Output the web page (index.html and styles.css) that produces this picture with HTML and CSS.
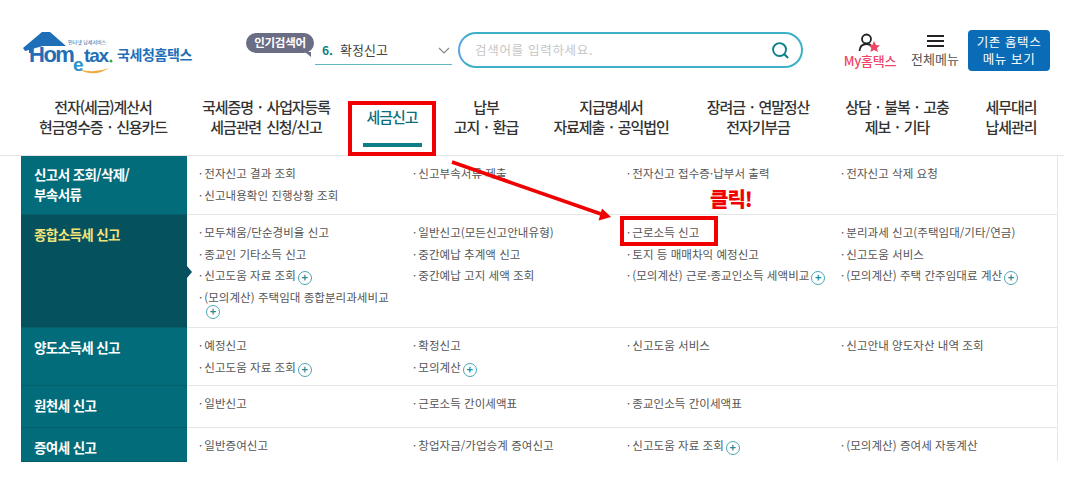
FILE: index.html
```html
<!DOCTYPE html>
<html lang="ko">
<head>
  <meta charset="utf-8">
  <title>국세청 홈택스</title>
  <link rel="stylesheet" href="styles.css">
</head>
<body>
  <div class="page">
    <header class="top">
      <a class="logo">
        <svg class="logo-mark" width="95" height="50" viewBox="0 0 95 50">
          <path d="M1 20 L20 4 H28 L44 18 H21 L10 21 V25 H7 V22 L3 23 Z" fill="#1f6fb8"/>
          <path d="M56 41 Q72 50 87 40 Q72 46 56 41 Z" fill="#f0a93c"/>
          <text x="7" y="34" class="logo-word">Hom</text>
          <text x="51" y="43" class="logo-e">e</text>
          <text x="62" y="34" class="logo-word small">tax</text>
          <circle cx="89" cy="33" r="1.500" fill="#3aa537"/>
          <text x="46" y="16" class="logo-sub">인터넷 납세서비스</text>
        </svg>
        <span class="logo-name">국세청홈택스</span>
      </a>

      <div class="popular">
        <span class="popular-tag">인기검색어</span>
        <div class="popular-select">
          <span class="popular-num">6.</span>
          <span class="popular-text">확정신고</span>
          <svg class="chev" width="12" height="7" viewBox="0 0 12 7"><path d="M1 1 L6 6 L11 1" fill="none" stroke="#888" stroke-width="1.200"/></svg>
        </div>
      </div>

      <div class="search">
        <span class="search-hint">검색어를 입력하세요.</span>
        <svg width="19" height="19" viewBox="0 0 20 20"><circle cx="9" cy="9" r="6.800" fill="none" stroke="#0d7f88" stroke-width="2"/><path d="M14 14 L18 18" stroke="#0d7f88" stroke-width="2.200"/></svg>
      </div>

      <a class="util util-my">
        <svg width="24" height="20" viewBox="0 0 24 20">
          <circle cx="8.500" cy="6" r="4.500" fill="none" stroke="#222" stroke-width="1.800"/>
          <path d="M1.500 18 Q2 11 8.500 11 Q12 11 13.500 13" fill="none" stroke="#222" stroke-width="1.800"/>
          <path d="M16 8 L18 12 L22 12.400 L19 15 L20 19 L16 17 L12.400 19 L13.300 15 L10.500 12.400 L14.300 12 Z" fill="#ee4667"/>
        </svg>
        <span>My홈택스</span>
      </a>
      <a class="util util-all">
        <span class="burger"><i></i><i></i><i></i></span>
        <span>전체메뉴</span>
      </a>
      <a class="old-btn">기존 홈택스<br>메뉴 보기</a>
    </header>

    <nav class="gnb">
      <a class="gnb-item w1">전자(세금)계산서<br>현금영수증 · 신용카드</a>
      <a class="gnb-item w2">국세증명 · 사업자등록<br>세금관련 신청/신고</a>
      <a class="gnb-item w3 active"><span>세금신고</span></a>
      <a class="gnb-item w4">납부<br>고지 · 환급</a>
      <a class="gnb-item w5">지급명세서<br>자료제출 · 공익법인</a>
      <a class="gnb-item w6">장려금 · 연말정산<br>전자기부금</a>
      <a class="gnb-item w7">상담 · 불복 · 고충<br>제보 · 기타</a>
      <a class="gnb-item w8">세무대리<br>납세관리</a>
    </nav>

    <section class="menu">
      <div class="row r1">
        <h3>신고서 조회/삭제/<br>부속서류</h3>
        <ul>
          <li>전자신고 결과 조회</li>
          <li>신고부속서류 제출</li>
          <li>전자신고 접수증·납부서 출력</li>
          <li>전자신고 삭제 요청</li>
          <li>신고내용확인 진행상황 조회</li>
        </ul>
      </div>
      <div class="row r2 current">
        <h3>종합소득세 신고</h3>
        <ul>
          <li>모두채움/단순경비율 신고</li>
          <li>일반신고(모든신고안내유형)</li>
          <li>근로소득 신고</li>
          <li>분리과세 신고(주택임대/기타/연금)</li>
          <li>종교인 기타소득 신고</li>
          <li>중간예납 추계액 신고</li>
          <li>토지 등 매매차익 예정신고</li>
          <li>신고도움 서비스</li>
          <li>신고도움 자료 조회<b class="plus">+</b></li>
          <li>중간예납 고지 세액 조회</li>
          <li>(모의계산) 근로·종교인소득 세액비교<b class="plus">+</b></li>
          <li>(모의계산) 주택 간주임대료 계산<b class="plus">+</b></li>
          <li class="wrap">(모의계산) 주택임대 종합분리과세비교 <b class="plus">+</b></li>
        </ul>
      </div>
      <div class="row r3">
        <h3>양도소득세 신고</h3>
        <ul>
          <li>예정신고</li>
          <li>확정신고</li>
          <li>신고도움 서비스</li>
          <li>신고안내 양도자산 내역 조회</li>
          <li>신고도움 자료 조회<b class="plus">+</b></li>
          <li>모의계산<b class="plus">+</b></li>
        </ul>
      </div>
      <div class="row r4">
        <h3>원천세 신고</h3>
        <ul>
          <li>일반신고</li>
          <li>근로소득 간이세액표</li>
          <li>종교인소득 간이세액표</li>
        </ul>
      </div>
      <div class="row r5">
        <h3>증여세 신고</h3>
        <ul>
          <li>일반증여신고</li>
          <li>창업자금/가업승계 증여신고</li>
          <li>신고도움 자료 조회<b class="plus">+</b></li>
          <li>(모의계산) 증여세 자동계산</li>
        </ul>
      </div>
      <span class="caret"></span>
    </section>

    <!-- annotations on top of the capture -->
    <div class="mark mark-nav"></div>
    <div class="mark mark-item"></div>
    <svg class="arrow" width="180" height="70" viewBox="0 0 180 70">
      <path d="M2 2 L151 54" stroke="#f00000" stroke-width="3.600"/>
      <path d="M161 57 L148.600 60.500 L152 48.500 Z" fill="#f00000"/>
    </svg>
    <span class="click">클릭!</span>
  </div>
</body>
</html>
```

FILE: styles.css
```css
* {
  box-sizing: border-box;
}
html, body {
  margin: 0;
  padding: 0;
  background: #fff;
}
body {
  font-family: "Noto Sans CJK KR", "Noto Sans", sans-serif;
  color: #333;
}
ul {
  list-style: none;
  margin: 0;
  padding: 0;
}
h3 {
  margin: 0;
}
.page {
  position: relative;
  width: 1077px;
  height: 498px;
  overflow: hidden;
}

/* header */
.top {
  display: flex;
  align-items: flex-start;
  height: 97px;
  padding: 20px 0 0 22px;
}
.logo {
  display: flex;
  align-items: flex-start;
  width: 224px;
  height: 50px;
}
.logo-mark {
  flex: none;
  margin-top: 8px;
}
.logo-word {
  font-family: "Liberation Sans", sans-serif;
  font-weight: 700;
  font-size: 22px;
  fill: #1f6fb8;
  letter-spacing: -1.500px;
}
.logo-e {
  font-family: "Liberation Sans", sans-serif;
  font-weight: 700;
  font-size: 19px;
  fill: #2a93c9;
}
.logo-word.small {
  font-size: 19px;
  letter-spacing: -1.200px;
}
.logo-sub {
  font-size: 5px;
  fill: #2a5f9a;
}
.logo-name {
  margin-top: 25px;
  font-size: 14px;
  font-weight: 700;
  letter-spacing: -0.400px;
  line-height: 18px;
  color: #1f6fb8;
  white-space: nowrap;
}
.popular {
  position: relative;
  width: 137px;
  height: 46px;
  margin-left: 69px;
  margin-right: 6px;
  flex: none;
  margin-top: 12px;
}
.popular-tag {
  position: absolute;
  left: -69px;
  top: 1px;
  width: 68px;
  height: 20px;
  border-radius: 10px;
  background: #6b6d85;
  color: #fff;
  font-size: 11.500px;
  font-weight: 700;
  line-height: 19px;
  text-align: center;
  letter-spacing: -0.300px;
  white-space: nowrap;
}
.popular-tag::after {
  content: "";
  position: absolute;
  right: 3px;
  bottom: -4px;
  border-top: 5px solid #6b6d85;
  border-left: 6px solid transparent;
}
.popular-select {
  display: flex;
  align-items: center;
  height: 33px;
  padding: 2px 2px 0 7px;
  border-bottom: 1px solid #5fb7c6;
  font-size: 13px;
  white-space: nowrap;
}
.popular-num {
  color: #0d7f88;
  font-weight: 700;
  font-size: 12px;
  margin-right: 7px;
}
.popular-text {
  color: #444;
  flex: 1;
}
.chev {
  margin-top: 2px;
}
.search {
  display: flex;
  align-items: center;
  justify-content: space-between;
  flex: none;
  width: 345px;
  height: 36px;
  margin-top: 12px;
  padding: 0 11px 0 15px;
  border: 2px solid #3cb0c6;
  border-left-color: #5aa5e2;
  border-radius: 18px;
}
.search-hint {
  font-size: 12.500px;
  color: #c6c6c6;
  letter-spacing: 0.700px;
  margin-top: -2px;
}
.util {
  display: flex;
  flex-direction: column;
  align-items: center;
  flex: none;
  margin-top: 13px;
  line-height: 16px;
  font-size: 13px;
  white-space: nowrap;
}
.util-my {
  width: 56px;
  margin-left: 39px;
  color: #ee4667;
  font-weight: 500;
  letter-spacing: -0.200px;
}
.util-all {
  width: 50px;
  margin-left: 12px;
  color: #555;
}
.burger {
  display: flex;
  flex-direction: column;
  justify-content: space-between;
  width: 17px;
  height: 12px;
  margin: 2px 0 4px;
}
.burger i {
  display: block;
  height: 2px;
  background: #222;
}
.old-btn {
  flex: none;
  width: 82px;
  height: 41px;
  margin: 10px 0 0 8px;
  padding-top: 3px;
  border-radius: 4px;
  background: #0a6cb6;
  color: #fff;
  font-size: 12.500px;
  line-height: 17px;
  letter-spacing: 0.600px;
  text-align: center;
}

/* main nav */
.gnb {
  display: flex;
  height: 58px;
  padding-left: 20px;
}
.gnb-item {
  flex: none;
  font-size: 15px;
  line-height: 20px;
  font-weight: 500;
  letter-spacing: -1.100px;
  word-spacing: 2px;
  text-align: center;
  color: #333;
  white-space: nowrap;
}
.w1 { width: 166px; }
.w2 { width: 160px; }
.w3 { width: 92px; }
.w4 { width: 96px; }
.w5 { width: 154px; }
.w6 { width: 140px; }
.w7 { width: 138px; }
.w8 { width: 90px; }
.active span {
  display: block;
  width: 59px;
  height: 50px;
  margin: 0 auto;
  padding-top: 9px;
  color: #0d6f7c;
  border-bottom: 4px solid #0d7f88;
  line-height: 22px;
}

/* table of menu rows */
.menu {
  position: relative;
  width: 1064px;
  height: 306px;
  padding-left: 21px;
  border-top: 1px solid #e6e6e6;
}
.row {
  display: flex;
  width: 1037px;
  border-right: 1px solid #e8e8e8;
  border-bottom: 1px solid #e6e6e6;
}
.row h3 {
  flex: none;
  width: 166px;
  padding: 9px 13px 0;
  background: #036c7a;
  border-bottom: 1px solid #055f6b;
  margin-bottom: -1px;
  color: #fff;
  font-size: 13.500px;
  font-weight: 700;
  line-height: 20px;
  letter-spacing: -0.600px;
}
.r1 h3 {
  padding-top: 8px;
}
.row ul {
  display: grid;
  grid-template-columns: repeat(4, 214px);
  grid-auto-rows: 21.500px;
  align-content: start;
  padding: 7px 0 0 12px;
}
.row li {
  font-size: 11.500px;
  line-height: 21px;
  color: #555;
  white-space: nowrap;
  letter-spacing: 0.050px;
}
.row li::before {
  content: "·";
  margin-right: 2px;
}
.row li.wrap {
  white-space: normal;
  width: 196px;
  padding-top: 3px;
  line-height: 15px;
}
.r1 { height: 59px; }
.r2 { height: 113px; }
.r3 { height: 58px; }
.r4 { height: 42px; }
.r5 { height: 33px; border-bottom: 0; }
.current h3 {
  background: #05525e;
  color: #f4e27a;
}
.plus {
  display: inline-block;
  width: 14px;
  height: 14px;
  margin-left: 2px;
  border: 1.500px solid #4aa6b0;
  border-radius: 50%;
  color: #1f8f9a;
  font-size: 11px;
  font-weight: 700;
  line-height: 10px;
  text-align: center;
  vertical-align: -2px;
}
.wrap .plus {
  display: block;
  margin: 0 0 0 7px;
}
.caret {
  position: absolute;
  left: 187px;
  top: 110px;
  border-left: 5px solid #05525e;
  border-top: 6px solid transparent;
  border-bottom: 6px solid transparent;
}

/* red annotations */
.mark {
  position: absolute;
  border: 4px solid #f00000;
}
.mark-nav {
  left: 348px;
  top: 101px;
  width: 88px;
  height: 55px;
}
.mark-item {
  left: 620px;
  top: 216px;
  width: 98px;
  height: 30px;
}
.arrow {
  position: absolute;
  left: 450px;
  top: 160px;
}
.click {
  position: absolute;
  left: 710px;
  top: 186px;
  color: #f00000;
  font-size: 20px;
  font-weight: 900;
  line-height: 26px;
  letter-spacing: -1px;
}
```
